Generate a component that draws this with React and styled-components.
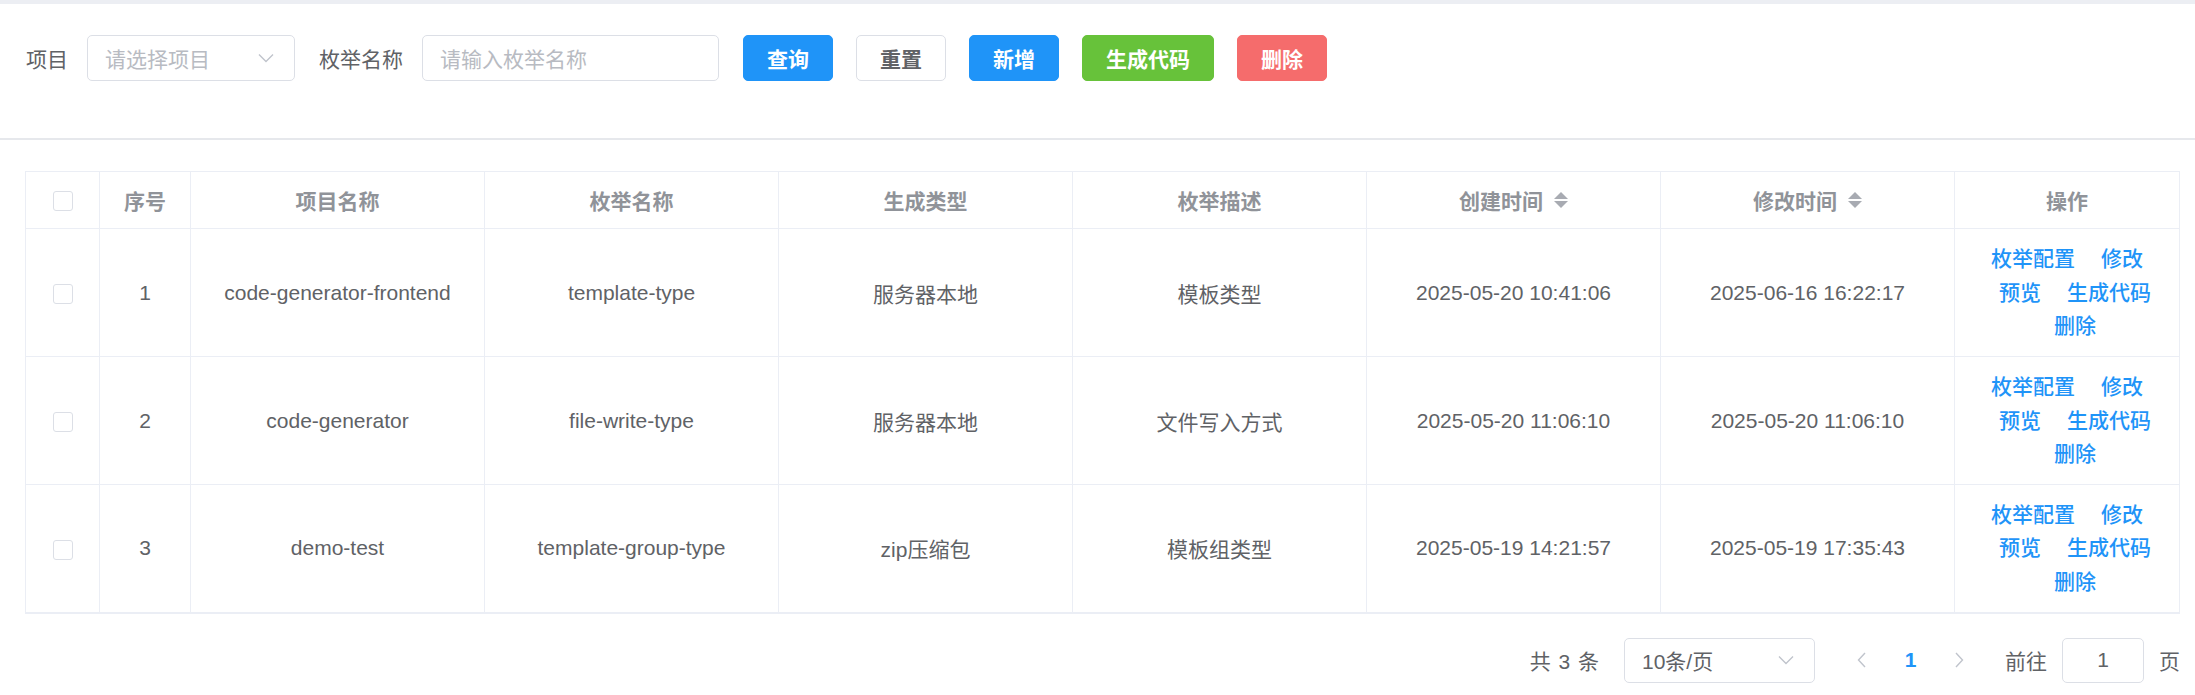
import React from "react";
import styled, { createGlobalStyle } from "styled-components";

const GlobalStyle = createGlobalStyle`
  html, body { margin: 0; padding: 0; background: #fff; }
  body {
    font-family: "Liberation Sans", "Noto Sans CJK SC", Arial, sans-serif;
    color: #606266;
  }
  * { box-sizing: border-box; }
`;

const BLUE = "#1f94f8";
const FS = "21px";

const Page = styled.div`
  width: 2195px;
  min-height: 695px;
  background: #fff;
`;

const TopBand = styled.div`
  height: 4px;
  background: #eceef3;
`;

const SearchSection = styled.section`
  padding: 31px 0 57px 26px;
  border-bottom: 2px solid #e6e8ec;
`;

const FormRow = styled.div`
  display: flex;
  align-items: center;
  height: 46px;
`;

const FormItem = styled.div`
  display: flex;
  align-items: center;
  gap: 19px;
  margin-right: 24px;
`;

const Label = styled.label`
  font-size: ${FS};
  color: #606266;
  white-space: nowrap;
`;

const Field = styled.div`
  display: flex;
  align-items: center;
  justify-content: space-between;
  width: ${(p) => p.$w}px;
  height: ${(p) => p.$h || 46}px;
  padding: 0 20px 0 17px;
  border: 1px solid #dcdfe6;
  border-radius: 5px;
  background: #fff;
  font-size: ${FS};
  color: ${(p) => (p.$placeholder ? "#b8bbc2" : "#606266")};
  white-space: nowrap;
`;

const Button = styled.button`
  height: 46px;
  padding: 0 23px;
  margin-right: 23px;
  border-radius: 5px;
  border: 1px solid ${(p) => p.$border};
  background: ${(p) => p.$bg};
  color: ${(p) => p.$color};
  font-family: inherit;
  font-size: ${FS};
  font-weight: 700;
  white-space: nowrap;
  cursor: pointer;
`;

const TableWrap = styled.div`
  margin: 31px 15px 0 25px;
`;

const Table = styled.table`
  width: 2155px;
  table-layout: fixed;
  border-collapse: collapse;
  border: 1px solid #ebeef5;
  border-bottom: 2px solid #ebeef5;
`;

const HeadRow = styled.tr`
  height: 57px;
`;

const BodyRow = styled.tr`
  height: 128px;
`;

const Th = styled.th`
  border: 1px solid #ebeef5;
  padding: 0 14px;
  font-size: ${FS};
  font-weight: 700;
  color: #909399;
  text-align: center;
  white-space: nowrap;
`;

const Td = styled.td`
  border: 1px solid #ebeef5;
  padding: 0 14px;
  font-size: ${FS};
  color: #606266;
  text-align: center;
  white-space: nowrap;
`;

const HeadInner = styled.span`
  display: inline-flex;
  align-items: center;
  justify-content: center;
`;

const SortSvg = styled.svg`
  margin-left: 11px;
  flex: none;
`;

const Checkbox = styled.span`
  display: inline-block;
  width: 20px;
  height: 20px;
  border: 1px solid #dcdfe6;
  border-radius: 3px;
  background: #fff;
  vertical-align: middle;
`;

const Actions = styled.div`
  display: flex;
  flex-wrap: wrap;
  justify-content: center;
  white-space: normal;
`;

const ActionLink = styled.button`
  border: 0;
  background: none;
  padding: 0 5px;
  line-height: 33.6px;
  font-family: inherit;
  font-size: ${FS};
  font-weight: 500;
  color: ${BLUE};
  white-space: nowrap;
  cursor: pointer;
  & + & {
    margin-left: 16px;
  }
`;

const Pagination = styled.div`
  display: flex;
  justify-content: flex-end;
  align-items: center;
  height: 45px;
  margin: 24px 15px 0 0;
  font-size: ${FS};
  color: #606266;
`;

const Total = styled.span`
  margin-right: 25px;
  word-spacing: 2px;
`;

const PagerBtn = styled.span`
  display: inline-flex;
  align-items: center;
  justify-content: center;
  width: 49px;
  height: 45px;
  color: ${(p) => (p.$active ? BLUE : "#c0c4cc")};
  font-weight: 700;
`;

const Pager = styled.div`
  display: flex;
  align-items: center;
  margin-left: 22px;
`;

const Jumper = styled.div`
  display: flex;
  align-items: center;
  gap: 15px;
  margin-left: 21px;
`;

const JumpInput = styled.div`
  width: 82px;
  height: 45px;
  display: flex;
  align-items: center;
  justify-content: center;
  border: 1px solid #dcdfe6;
  border-radius: 5px;
  color: #606266;
`;

const ChevronDown = () => (
  <svg width="16" height="10" viewBox="0 0 16 10">
    <polyline points="1,1.5 8,8.5 15,1.5" fill="none" stroke="#c0c4cc" strokeWidth="1.4" />
  </svg>
);

const ChevronLeft = () => (
  <svg width="9" height="16" viewBox="0 0 9 16">
    <polyline points="8,1 1.5,8 8,15" fill="none" stroke="#c0c4cc" strokeWidth="1.4" />
  </svg>
);

const ChevronRight = () => (
  <svg width="9" height="16" viewBox="0 0 9 16">
    <polyline points="1,1 7.5,8 1,15" fill="none" stroke="#c0c4cc" strokeWidth="1.4" />
  </svg>
);

const SortIcon = () => (
  <SortSvg width="14" height="16" viewBox="0 0 14 16">
    <polygon points="0,7 7,0 14,7" fill="#a8abb2" />
    <polygon points="0,9 14,9 7,16" fill="#a8abb2" />
  </SortSvg>
);

const columns = [
  { key: "check", w: 74 },
  { key: "idx", title: "序号", w: 91 },
  { key: "project", title: "项目名称", w: 294 },
  { key: "name", title: "枚举名称", w: 294 },
  { key: "type", title: "生成类型", w: 294 },
  { key: "desc", title: "枚举描述", w: 294 },
  { key: "created", title: "创建时间", w: 294, sort: true },
  { key: "updated", title: "修改时间", w: 294, sort: true },
  { key: "ops", title: "操作" },
];

const rows = [
  {
    idx: 1,
    project: "code-generator-frontend",
    name: "template-type",
    type: "服务器本地",
    desc: "模板类型",
    created: "2025-05-20 10:41:06",
    updated: "2025-06-16 16:22:17",
  },
  {
    idx: 2,
    project: "code-generator",
    name: "file-write-type",
    type: "服务器本地",
    desc: "文件写入方式",
    created: "2025-05-20 11:06:10",
    updated: "2025-05-20 11:06:10",
  },
  {
    idx: 3,
    project: "demo-test",
    name: "template-group-type",
    type: "zip压缩包",
    desc: "模板组类型",
    created: "2025-05-19 14:21:57",
    updated: "2025-05-19 17:35:43",
  },
];

const actions = ["枚举配置", "修改", "预览", "生成代码", "删除"];

export default function App() {
  return (
    <Page>
      <GlobalStyle />
      <TopBand />
      <SearchSection>
        <FormRow>
          <FormItem>
            <Label>项目</Label>
            <Field $w={208} $placeholder>
              <span>请选择项目</span>
              <ChevronDown />
            </Field>
          </FormItem>
          <FormItem>
            <Label>枚举名称</Label>
            <Field $w={297} $placeholder>
              <span>请输入枚举名称</span>
            </Field>
          </FormItem>
          <Button $bg={BLUE} $border={BLUE} $color="#fff">查询</Button>
          <Button $bg="#fff" $border="#dcdfe6" $color="#606266">重置</Button>
          <Button $bg={BLUE} $border={BLUE} $color="#fff">新增</Button>
          <Button $bg="#67c23a" $border="#67c23a" $color="#fff">生成代码</Button>
          <Button $bg="#f56c6c" $border="#f56c6c" $color="#fff">删除</Button>
        </FormRow>
      </SearchSection>

      <TableWrap>
        <Table>
          <colgroup>
            {columns.map((c) => (
              <col key={c.key} style={c.w ? { width: c.w } : undefined} />
            ))}
          </colgroup>
          <thead>
            <HeadRow>
              {columns.map((c) => (
                <Th key={c.key}>
                  {c.key === "check" ? (
                    <Checkbox />
                  ) : (
                    <HeadInner>
                      {c.title}
                      {c.sort && <SortIcon />}
                    </HeadInner>
                  )}
                </Th>
              ))}
            </HeadRow>
          </thead>
          <tbody>
            {rows.map((r) => (
              <BodyRow key={r.idx}>
                <Td><Checkbox /></Td>
                <Td>{r.idx}</Td>
                <Td>{r.project}</Td>
                <Td>{r.name}</Td>
                <Td>{r.type}</Td>
                <Td>{r.desc}</Td>
                <Td>{r.created}</Td>
                <Td>{r.updated}</Td>
                <Td>
                  <Actions>
                    {actions.map((a) => (
                      <ActionLink key={a}>{a}</ActionLink>
                    ))}
                  </Actions>
                </Td>
              </BodyRow>
            ))}
          </tbody>
        </Table>
      </TableWrap>

      <Pagination>
        <Total>共 3 条</Total>
        <Field $w={191} $h={45}>
          <span>10条/页</span>
          <ChevronDown />
        </Field>
        <Pager>
          <PagerBtn><ChevronLeft /></PagerBtn>
          <PagerBtn $active>1</PagerBtn>
          <PagerBtn><ChevronRight /></PagerBtn>
        </Pager>
        <Jumper>
          <span>前往</span>
          <JumpInput>1</JumpInput>
          <span>页</span>
        </Jumper>
      </Pagination>
    </Page>
  );
}
